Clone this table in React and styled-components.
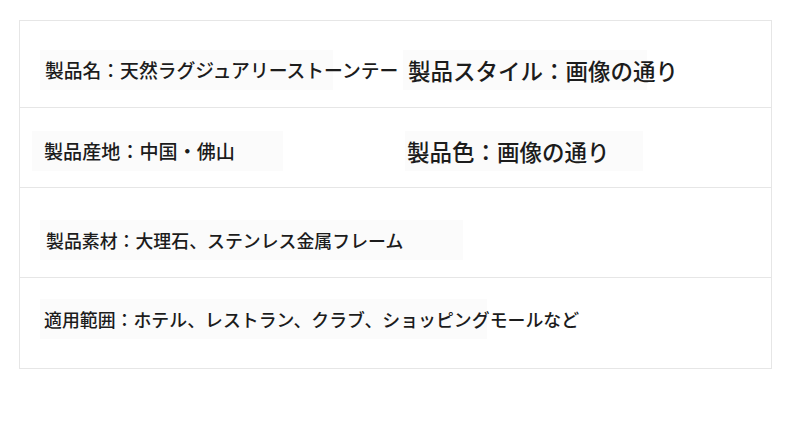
import React from "react";
import styled, { createGlobalStyle } from "styled-components";

const GlobalStyle = createGlobalStyle`
  html, body {
    margin: 0;
    padding: 0;
    background: #ffffff;
  }
  body {
    font-family: "Noto Sans CJK JP", "Noto Sans", sans-serif;
    color: #1c1c1c;
  }
`;

const Page = styled.div`
  width: 790px;
  height: 447px;
  padding: 20px 0 0 19px;
  box-sizing: border-box;
`;

const Table = styled.div`
  width: 753px;
  border: 1px solid #e6e6e6;
  box-sizing: border-box;
  display: flex;
  flex-direction: column;
`;

const Row = styled.div`
  display: grid;
  grid-template-columns: 383px 1fr;
  align-items: center;
  height: ${(p) => p.$h}px;
  padding-top: ${(p) => p.$top || 0}px;
  padding-bottom: ${(p) => p.$bottom || 0}px;
  box-sizing: border-box;
  border-bottom: ${(p) => (p.$last ? "none" : "1px solid #e6e6e6")};
`;

const Cell = styled.div`
  grid-column: ${(p) => (p.$wide ? "1 / -1" : "auto")};
  width: ${(p) => p.$w}px;
  height: 40px;
  margin-left: ${(p) => p.$ml}px;
  padding-left: ${(p) => p.$pl}px;
  box-sizing: border-box;
  background: #fbfbfb;
  font-size: ${(p) => p.$fs}px;
  font-weight: 500;
  line-height: 40px;
  white-space: nowrap;
  overflow: visible;
  text-spacing-trim: space-all;
  font-feature-settings: "fwid" 1;
`;

const App = () => {
  return (
    <>
      <GlobalStyle />
      <Page>
        <Table>
          <Row $h={87} $top={12}>
            <Cell $w={293} $ml={20} $pl={5} $fs={18.8}>
              製品名：天然ラグジュアリーストーンテー
            </Cell>
            <Cell $w={244} $ml={0} $pl={5} $fs={22.5}>
              製品スタイル：画像の通り
            </Cell>
          </Row>
          <Row $h={80} $top={7}>
            <Cell $w={251} $ml={12} $pl={12} $fs={19.1}>
              製品産地：中国・佛山
            </Cell>
            <Cell $w={238} $ml={2} $pl={2} $fs={22.5}>
              製品色：画像の通り
            </Cell>
          </Row>
          <Row $h={90} $top={15}>
            <Cell $wide $w={423} $ml={20} $pl={6} $fs={17.9}>
              製品素材：大理石、ステンレス金属フレーム
            </Cell>
          </Row>
          <Row $h={90} $bottom={8} $last>
            <Cell $wide $w={447} $ml={20} $pl={4} $fs={17.9}>
              適用範囲：ホテル、レストラン、クラブ、ショッピングモールなど
            </Cell>
          </Row>
        </Table>
      </Page>
    </>
  );
};

export default App;
